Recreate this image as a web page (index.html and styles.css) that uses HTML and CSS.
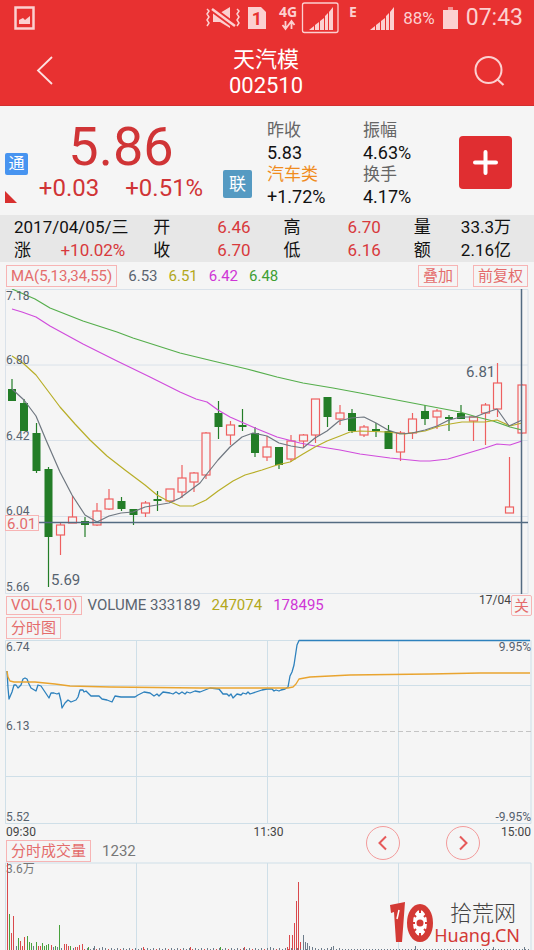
FILE: index.html
```html
<!DOCTYPE html>
<html lang="zh-CN">
<head>
<meta charset="utf-8">
<meta name="viewport" content="width=device-width, initial-scale=1">
<title>天汽模 002510</title>
<link rel="stylesheet" href="styles.css">
</head>
<body>
<header class="top">
  <div class="status">
    <svg class="status-shot" width="21" height="24" viewBox="0 0 21 24"><path d="M1.500 1.500h18v21h-18z" fill="none" stroke="#fcd0d0" stroke-width="2.500"/><path d="M5 18v-4l4-2 2 2 5-4v8z" fill="#fcd0d0"/></svg>
    <svg width="34" height="26" viewBox="206 5 34 26"><path d="M213 13h7l10-6v21l-10-6h-7z" fill="#fcd0d0"/><path d="M212 9l23 17" stroke="#e83131" stroke-width="6"/><path d="M212 9l23 17" stroke="#fcd0d0" stroke-width="2.500"/><path d="M207 9l2 2-2 3 2 3-2 3 2 3-2 3M237 9l2 2-2 3 2 3-2 3 2 3-2 3" fill="none" stroke="#fcd0d0" stroke-width="1.500"/></svg>
    <svg width="18" height="24" viewBox="0 0 18 24"><path d="M0 1h13l5 5v17H0z" fill="#fcd0d0"/><text x="9" y="19" class="sim-number">1</text></svg>
    <svg width="66" height="32" viewBox="274 2 66 32"><text x="279" y="17" class="net-type">4G</text><path d="M285.500 21v7m-3-3l3 4 3-4M291.500 29v-7m-3 3l3-4 3 4" fill="none" stroke="#fcd0d0" stroke-width="1.800"/><rect x="302.500" y="3" width="35.500" height="29.500" rx="2" fill="none" stroke="#fcd0d0" stroke-width="1.300"/><path d="M309 30l5-4v4zM315 25l4-3v8h-4zM320 21l4-3v12h-4zM325 16l3-3v17h-3zM329 12l4-5v23h-4z" fill="#fcd0d0"/></svg>
    <svg width="47" height="32" viewBox="348 2 47 32"><text x="349" y="17" class="net-type">E</text><path d="M370 30l5-4v4zM376 25l4-3v8h-4zM381 21l4-3v12h-4zM386 16l3-3v17h-3zM390 12l4-5v23h-4z" fill="#fcd0d0"/></svg>
    <span class="battery-level">88%</span>
    <svg width="15" height="24" viewBox="0 0 15 24"><path d="M5 1h5v3H5z" fill="#f39393"/><path d="M0 4h15v19H0z" fill="#fcd0d0"/></svg>
    <time class="clock">07:43</time>
  </div>
  <div class="title-bar">
    <button class="icon-button" aria-label="返回"><svg width="30" height="34" viewBox="0 0 30 34"><path d="M22 3L8 16.500 22 30" fill="none" stroke="#fde0e0" stroke-width="1.800"/></svg></button>
    <h1 class="title">天汽模<br>002510</h1>
    <button class="icon-button" aria-label="搜索"><svg width="34" height="34" viewBox="0 0 34 34"><circle cx="16.500" cy="16" r="13" fill="none" stroke="#fcd0d0" stroke-width="2"/><path d="M25 25l6.500 6" stroke="#fcd0d0" stroke-width="2.200"/></svg></button>
  </div>
</header>

<main>
<section class="quote">
  <div class="marks"><span class="mark-tong">通</span><i class="corner"></i></div>
  <div class="price-block">
    <strong class="price">5.86</strong>
    <div class="change"><span>+0.03</span><span>+0.51%</span></div>
  </div>
  <span class="mark-lian">联</span>
  <dl class="stats"><dt>昨收</dt><dd>5.83</dd><dt class="sector">汽车类</dt><dd>+1.72%</dd></dl>
  <dl class="stats"><dt>振幅</dt><dd>4.63%</dd><dt>换手</dt><dd>4.17%</dd></dl>
  <button class="add" aria-label="添加自选"><svg width="25" height="25" viewBox="0 0 25 25"><path d="M12.500 2v21M2 12.500h21" stroke="#fff" stroke-width="4" stroke-linecap="round"/></svg></button>
</section>

<section class="day">
  <div class="cell">2017/04/05/三</div>
  <div class="cell">开<b>6.46</b></div>
  <div class="cell">高<b>6.70</b></div>
  <div class="cell">量<span>33.3万</span></div>
  <div class="cell cell-rise">涨<b>+10.02%</b></div>
  <div class="cell">收<b>6.70</b></div>
  <div class="cell">低<b>6.16</b></div>
  <div class="cell">额<span>2.16亿</span></div>
</section>

<div class="tools tools-ma">
  <button class="tag">MA(5,13,34,55)</button>
  <span class="c-gray">6.53</span><span class="c-yellow">6.51</span><span class="c-magenta">6.42</span><span class="c-green">6.48</span>
  <button class="tag push">叠加</button>
  <button class="tag">前复权</button>
</div>

<svg class="chart" viewBox="0 289 534 305" role="img" aria-label="日K线">
  <path class="grid" d="M5.500 593.500v-304h522.500v304zM5.500 365h522.500M5.500 440.500h522.500M5.500 516.500h522.500"/>
  <g id="candles"></g>
  <polyline class="line s-green" points="12,289 35,299 50,308 83,321 117,332 133,338 180,353 213,361 247,369 277,377 303,383 333,388 360,393 423,405 460,412 477,417 493,421 510,427 522,430"/>
  <polyline class="line s-magenta" points="12,309 22,312 36,317 50,326 83,344 117,361 150,377 180,392 196,399 207,402 218,410 230,417 255,428 277,437 300,443 315,446 340,450 360,454 390,458 420,461 430,461 448,459 465,454 485,448 497,444 510,445 522,441"/>
  <polyline class="line s-yellow" points="12,356 24,364 36,375 48,391 60,407 75,424 90,440 107,456 125,470 145,485 157,495 168,501 180,506 193,506 206,500 218,491 233,481 245,475 262,470 277,465 290,462 303,454 315,447 327,441 340,436 350,432 360,431 387,432 405,434 425,431 440,426 450,424 462,422 485,422 497,420 510,426 522,423"/>
  <polyline class="line s-gray" points="12,389 24,400 36,416 46,440 60,472 72,495 85,515 97,522 109,516 121,513 133,512 145,507 157,505 169,503 180,498 200,483 206,475 218,460 230,447 242,437 253,433 267,436 279,443 291,446 303,448 315,438 327,431 339,421 351,418 364,417 376,423 388,430 400,434 412,433 425,430 437,426 449,420 461,417 475,417 485,413 497,409 509,426 522,420"/>
  <path class="cross" d="M39 522.500h489M521.500 289v305"/>
  <g class="axis">
    <text x="6" y="300">7.18</text><text x="6" y="364">6.80</text><text x="6" y="440">6.42</text><text x="6" y="515">6.04</text><text x="6" y="591">5.66</text>
  </g>
  <g class="extreme"><text x="466" y="377">6.81</text><text x="51" y="585">5.69</text></g>
  <rect x="5.500" y="515.500" width="33" height="15" fill="#f5f5f5" stroke="#f7b4b4"/>
  <text x="7" y="529" class="cross-price">6.01</text>
</svg>

<div class="tools tools-vol">
  <button class="tag">VOL(5,10)</button>
  <span class="c-gray volume">VOLUME 333189</span><span class="c-yellow">247074</span><span class="c-magenta">178495</span>
  <span class="push month">17/04</span><button class="tag close">关</button>
</div>
<div class="tools tools-min"><button class="tag">分时图</button></div>

<svg class="chart" viewBox="0 639 534 186" role="img" aria-label="分时走势">
  <path class="grid blue-grid" d="M5.500 640.500h525.500v183H5.500zM5.500 685.500h525.500M5.500 776.500h525.500M136.500 640v184M267.500 640v184M398.500 640v184"/>
  <path class="mid" d="M30 731.500h501"/>
  <polyline class="line s-blue" points="7,671 8,688 9,699 12,692 14,685 16,685 18,688 21,685 23,679 25,678 27,679 29,684 31,688 36,691 38,685 41,686 45,692 49,698 51,693 54,693 57,694 59,693 61,701 62,708 65,703 68,700 71,702 76,700 78,697 80,690 83,690 84,692 86,691 91,696 99,696 102,699 107,700 112,702 115,696 121,697 135,697 138,695 144,692 150,693 154,696 157,694 159,696 163,692 170,693 173,694 176,692 179,694 182,692 185,694 187,692 190,693 195,691 200,692 205,690 210,688 219,689 223,694 227,694 229,696 231,694 233,698 237,694 241,695 243,693 246,694 248,692 250,694 262,690 267,689 272,689 274,691 276,690 279,691 281,690 285,689 288,687 290,676 292,672 294,665 297,645 299,640.500 530,640.500"/>
  <polyline class="line s-orange" points="7,671 8,677 10,681 14,682 35,682 55,684 70,686 110,687 200,688 288,688 293,687 296,684 299,679 310,677 350,675 430,674 480,673 530,673"/>
  <g class="axis">
    <text x="6" y="651">6.74</text><text x="6" y="730">6.13</text><text x="6" y="821">5.52</text>
    <text x="531" y="651" text-anchor="end">9.95%</text><text x="531" y="821" text-anchor="end">-9.95%</text>
  </g>
</svg>

<div class="lower">
  <div class="hours"><time>09:30</time><time>11:30</time><time>15:00</time></div>
  <div class="tools tools-amount"><button class="tag">分时成交量</button><span class="c-dim">1232</span></div>
  <div class="pager">
    <button class="round" aria-label="前一日"><svg width="16" height="16" viewBox="0 0 16 16"><path d="M11 1.500L4.500 8l6.500 6.500"/></svg></button>
    <button class="round" aria-label="后一日"><svg width="16" height="16" viewBox="0 0 16 16"><path d="M5 1.500L11.500 8 5 14.500"/></svg></button>
  </div>
</div>

<div class="amount">
  <svg class="chart" viewBox="0 862 534 88" role="img" aria-label="分时成交量">
    <path class="grid blue-grid" d="M5.500 950v-87h525.500v87M136.500 863v87M267.500 863v87M398.500 863v87"/>
    <g class="axis"><text x="6" y="873" class="amount-max">3.6万</text></g>
    <g id="bars"></g>
  </svg>
  <div class="brand">
    <svg width="45" height="42" viewBox="391 901 45 42">
      <path d="M392 904l15-3-3 40h-6l-2-30-3 1z" fill="#d33a35"/>
      <path d="M401 909l-2 9" stroke="#fff" stroke-width="1.500"/>
      <ellipse cx="422" cy="922" rx="10" ry="16" fill="#fff" stroke="#d33a35" stroke-width="6"/>
      <path d="M422 906v6M422 932v6M412 922h5M427 922h5M414 912l4 4M430 912l-4 4M414 932l4-4M430 932l-4-4" stroke="#d33a35" stroke-width="2"/>
      <circle cx="422" cy="922" r="3.500" fill="#d33a35"/>
    </svg>
    <div class="brand-name"><span>拾荒网</span><span class="brand-url">Huang.CN</span></div>
  </div>
</div>
</main>
<script src="app.js"></script>
</body>
</html>
```
FILE: styles.css
```css
* { box-sizing: border-box; }
body {
  margin: 0;
  background: #f5f5f5;
  color: #111;
  font-family: Roboto, "Noto Sans CJK SC", sans-serif;
  overflow-x: hidden;
}
button { font: inherit; margin: 0; padding: 0; border: 0; background: none; cursor: pointer; }
svg { display: block; flex: none; }

.top { background: #e83131; color: #fff; border-bottom: 1px solid #d32f2f; }
.status { display: flex; align-items: center; gap: 8px; height: 36px; padding: 0 11px 0 14px; color: #fcd0d0; }
.status-shot { margin-right: auto; }
.battery-level { font-size: 17px; line-height: 38px; }
.clock { font-size: 23px; line-height: 38px; }
.sim-number { font-size: 18px; font-weight: 700; fill: #e83131; text-anchor: middle; }
.net-type { font-family: "Open Sans", sans-serif; font-size: 14px; font-weight: 700; fill: #fcd0d0; }
.title-bar { display: flex; justify-content: space-between; align-items: center; height: 69px; padding: 0 28px 0 30px; }
.title { margin: 0; font-size: 22px; line-height: 26px; font-weight: 400; text-align: center; padding-top: 4px; }
.icon-button { color: #fff; }

.quote { display: grid; grid-template-columns: 24px 184fr 54px 96fr 96fr 53px; height: 109px; padding: 0 22px 0 5px; }
.marks { display: flex; flex-direction: column; justify-content: space-between; padding: 47px 0 12px; }
.mark-tong { width: 23px; height: 22px; border-radius: 2px; background: #4794f0; color: #fff; font-size: 16px; line-height: 22px; text-align: center; }
.corner { width: 12px; height: 12px; background: #d8302f; clip-path: polygon(0 0, 100% 100%, 0 100%); }
.price-block { color: #d03436; text-align: center; padding-top: 14px; }
.price { display: block; font-size: 54px; line-height: 54px; font-weight: 400; }
.change { display: flex; justify-content: center; gap: 26px; font-size: 24px; line-height: 28px; }
.mark-lian { width: 29px; height: 28px; margin: 64px 0 0 10px; border-radius: 2px; background: #559ac2; color: #fff; font-size: 17px; line-height: 28px; text-align: center; }
.stats { margin: 0; padding-top: 13px; font-size: 18px; line-height: 22px; }
.stats dt { height: 22px; font-size: 17px; color: #666; }
.stats dd { height: 22px; margin: 0; line-height: 24px; }
.stats .sector { color: #f08c1e; }
.add { display: grid; place-items: center; width: 53px; height: 53px; margin-top: 30px; border-radius: 4px; background: #e02e31; }

.day { display: grid; grid-template-columns: minmax(0, 106fr) 97fr 97fr 97fr; column-gap: 33px; grid-auto-rows: 23px; padding: 0 23px 1px 14px; background: #e7e7e7; font-size: 17px; line-height: 24px; }
.cell { display: flex; justify-content: space-between; white-space: nowrap; }
.cell b { font-weight: 400; color: #d8393c; }
.cell-rise { margin-right: -5px; }

.tools { display: flex; align-items: center; padding-left: 6px; font-size: 15px; line-height: 20px; }
.tools-ma { gap: 11px; height: 28px; margin-bottom: -1px; padding-right: 6px; }
.tag { border: 1px solid #f7b4b4; color: #e46c6c; padding: 0 4px; white-space: nowrap; height: 22px; line-height: 20px; }
.push { margin-left: auto; }
.tools-ma .tag + .tag { margin-left: 4px; }
.tools-vol { gap: 11px; height: 22px; }
.tools-vol .tag { height: 19px; line-height: 17px; }
.tools-vol .volume { margin-left: -6px; }
.month { font-size: 12px; line-height: 12px; color: #444; padding-bottom: 10px; }
.tools-vol .close { width: 21px; height: 21px; margin: 0 2px 0 -11px; padding: 0; line-height: 20px; border-radius: 2px; }
.tools-min { height: 23px; }
.c-gray { color: #5b6470; }
.c-yellow { color: #b3a81c; }
.c-magenta { color: #cf35d6; }
.c-green { color: #3f9f33; }
.c-dim { color: #777; }

.chart { width: 100%; height: auto; }
.grid { fill: none; stroke: #dae2ea; }
.blue-grid { stroke: #cfdfe8; }
.mid { stroke: #c4c4c4; stroke-dasharray: 5 3; }
.line { fill: none; stroke-width: 1.2; stroke-linejoin: round; }
.s-green { stroke: #55ae4c; }
.s-magenta { stroke: #d04cdc; }
.s-yellow { stroke: #b8ae28; }
.s-gray { stroke: #6f7780; }
.s-blue { stroke: #2d81bd; stroke-width: 1.3; }
.s-orange { stroke: #e9a42f; stroke-width: 1.4; }
.cross { stroke: #536b82; stroke-width: 1.5; }
.axis text { font-size: 12px; fill: #56626f; }
.axis .amount-max { fill: #777; }
.extreme text { font-size: 15px; fill: #56626f; }
.cross-price { font-size: 15px; fill: #e46c6c; }
.up { fill: #f5f5f5; stroke: #ee6060; stroke-width: 1.2; }
.up-wick { stroke: #ee6060; stroke-width: 1.2; }
.down { fill: #237d27; }
.down-wick { stroke: #237d27; stroke-width: 1.2; }

.lower { position: relative; height: 37px; }
.hours { display: flex; justify-content: space-between; padding: 0 3px 0 6px; height: 15px; font-size: 12px; line-height: 14px; color: #444; }
.tools-amount { gap: 11px; height: 22px; }
.pager { position: absolute; top: 1px; right: 54px; display: flex; gap: 46px; }
.round { display: grid; place-items: center; width: 34px; height: 34px; border: 1px solid #f39b9b; border-radius: 50%; }
.round path { fill: none; stroke: #e65a5a; stroke-width: 2; }

.amount { position: relative; }
.brand { position: absolute; right: 14px; bottom: 6px; display: flex; align-items: center; }
.brand-name { display: flex; flex-direction: column; align-items: flex-end; font-size: 22px; line-height: 24px; color: #444; font-weight: 300; }
.brand-name > span:first-child { margin-right: 4px; }
.brand-url { font-family: "Noto Sans", sans-serif; font-weight: 400; font-size: 18px; line-height: 18px; color: #d33a35; }
```
FILE: app.js
```js
const NS = "http://www.w3.org/2000/svg";

function add(parent, name, attributes) {
  const node = document.createElementNS(NS, name);
  for (const key in attributes) node.setAttribute(key, attributes[key]);
  parent.appendChild(node);
}

// Each row: direction, high, low, body top, body bottom.
const candles = [
  ["d",379,401,389,401],["d",399,431,403,431],["d",423,473,433,471],["d",467,587,469,537],
  ["u",522,555,525,535],["u",496,523,517,523],["d",517,537,521,525],["u",503,526,511,525],
  ["u",489,510,499,509],["d",497,511,501,509],["d",509,525,509,515],["u",501,517,503,513],
  ["d",491,511,499,501],["u",489,502,489,501],["u",465,498,478,492],["u",472,492,473,482],
  ["u",432,479,433,475],["d",401,439,413,427],["u",421,445,425,435],["d",409,431,425,427],
  ["d",427,457,433,453],["u",436,461,447,457],["d",447,469,447,465],["u",435,462,441,459],
  ["u",434,448,435,441],["u",399,443,399,435],["d",397,427,397,417],["u",405,425,413,419],
  ["d",409,433,413,431],["u",425,437,427,435],["d",423,437,429,431],["d",425,449,431,449],
  ["u",431,461,433,452],["u",413,439,419,433],["d",405,425,411,419],["u",409,429,411,417],
  ["d",415,431,417,419],["d",405,419,413,419],["u",416,441,417,421],["u",403,445,405,413],
  ["u",363,417,383,409],["u",457,513,507,513],["u",384,434,385,433]
];
const candleLayer = document.getElementById("candles");
candles.forEach(([direction, high, low, top, bottom], i) => {
  const x = Math.round((12 + i * 12.14) * 2) / 2;
  const up = direction === "u";
  add(candleLayer, "path", { class: up ? "up-wick" : "down-wick", d: `M${x} ${high}V${low}` });
  add(candleLayer, "rect", { class: up ? "up" : "down", x: x - 4, y: top, width: 8, height: bottom - top });
});

const colors = { r: "#d9494c", g: "#48a13c", b: "#6d7c8a" };
const bars = [
  [7,"r",87],[9,"g",36],[11,"r",17],[13,"r",34],[16,"b",4],[18,"g",12],[20,"r",9],[22,"r",4],[24,"r",13],
  [27,"g",14],[29,"g",8],[31,"g",7],[33,"b",4],[36,"g",8],[38,"r",4],[40,"r",4],[42,"g",7],[44,"g",4],
  [46,"g",5],[48,"g",6],[51,"r",5],[53,"b",3],[55,"g",4],[57,"b",3],[59,"g",25],[61,"b",2],[64,"r",6],
  [66,"r",6],[68,"r",4],[70,"g",4],[73,"b",2],[75,"r",3],[77,"r",3],[79,"r",5],[82,"r",6],[88,"g",3],
  [94,"b",4],[102,"b",3],[143,"r",3],[190,"r",3],[220,"g",3],[244,"r",3],[270,"b",3],
  [287,"r",3],[289,"r",15],[292,"r",15],[294,"r",27],[296,"r",49],[298,"r",68],[300,"r",8],[303,"b",15],
  [305,"b",8],[307,"b",7],[309,"b",4],[312,"b",3],[331,"b",3],[333,"b",4],[415,"b",4],[493,"b",3],[524,"b",3]
];
for (let x = 84; x < 530; x += 3) bars.push([x, x < 290 && x % 4 === 0 ? "r" : "b", x > 340 ? 1 : 1 + x % 2]);
const barLayer = document.getElementById("bars");
for (const [x, color, height] of bars) {
  add(barLayer, "rect", { x, y: 950 - height, width: 1, height, fill: colors[color] });
}
```
